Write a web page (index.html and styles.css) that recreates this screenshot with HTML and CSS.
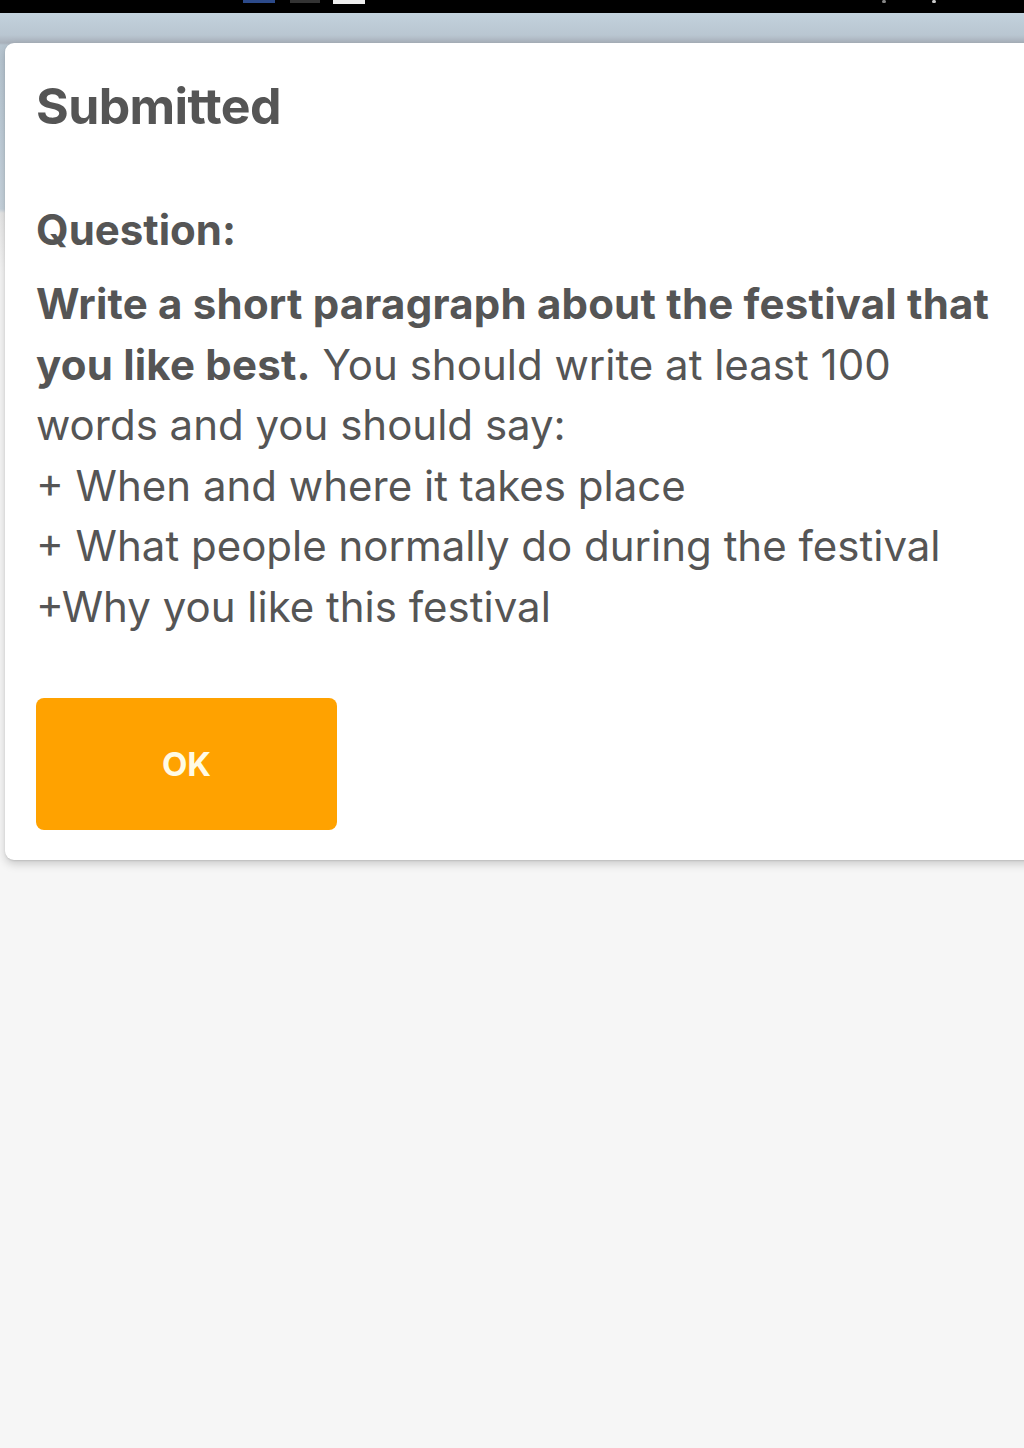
FILE: index.html
```html
<!DOCTYPE html>
<html lang="en">
<head>
<meta charset="utf-8">
<title>Submitted</title>
<link rel="stylesheet" href="styles.css">
</head>
<body>
<div class="statusbar">
  <span class="sb sb-blue"></span>
  <span class="sb sb-gray"></span>
  <span class="sb sb-white"></span>
  <span class="sb-dot sb-dot1"></span>
  <span class="sb-dot sb-dot2"></span>
</div>
<div class="page">
  <div class="card">
    <h1 class="title">Submitted</h1>
    <h2 class="label">Question:</h2>
    <p class="question"><strong>Write a short paragraph about the festival that you like best.</strong> You should write at least 100 words and you should say:<br>+ When and where it takes place<br>+ What people normally do during the festival<br>+Why you like this festival</p>
    <button class="ok">OK</button>
  </div>
</div>
</body>
</html>
```
FILE: styles.css
```css
html, body {
  margin: 0;
  padding: 0;
}
body {
  width: 1024px;
  height: 1448px;
  overflow: hidden;
  background: #f5f5f5;
  font-family: "Inter", "Liberation Sans", sans-serif;
  color: #555555;
}
.statusbar {
  height: 13px;
  background: #000;
  position: relative;
}
.sb {
  position: absolute;
  top: 0;
  height: 3px;
}
.sb-blue { left: 243px; width: 32px; background: #2c4a8a; }
.sb-gray { left: 290px; width: 30px; background: #333; }
.sb-white { left: 333px; width: 32px; height: 4px; background: #eee; }
.sb-dot {
  position: absolute;
  top: 0;
  width: 4px;
  height: 3px;
  background: #888;
  border-radius: 2px;
}
.sb-dot1 { left: 882px; }
.sb-dot2 { left: 932px; background: #ccc; }
.page {
  background:
    linear-gradient(180deg, #c3d2dd 0px, #b9c6d1 22px, #a9b1bb 30px, #b7c5d0 32px, #bfcdd8 120px, #c7d3dd 196px, #e8e8e8 200px, #f6f6f6 260px);
  padding: 30px 0 0 5px;
  height: 1435px;
  box-sizing: border-box;
}
.card {
  background: #fff;
  border-radius: 9px;
  margin-right: -20px;
  padding: 30px 31px 30px 31px;
  box-shadow: 0 4px 10px rgba(0, 0, 0, 0.18), 0 1px 2px rgba(0,0,0,0.1);
  height: 817px;
  box-sizing: border-box;
}
.title {
  margin: 0;
  font-size: 50px;
  font-weight: 700;
  line-height: 66px;
  letter-spacing: -0.6px;
}
.label {
  margin: 61px 0 0 0;
  font-size: 42px;
  font-weight: 700;
  line-height: 60px;
}
.question {
  margin: 14px 0 0 0;
  font-size: 42px;
  font-weight: 400;
  line-height: 60.5px;
}
.question strong {
  font-weight: 700;
  letter-spacing: 0.2px;
}
.ok {
  display: block;
  margin-top: 61px;
  width: 301px;
  height: 132px;
  border: none;
  border-radius: 8px;
  background: #ffa200;
  color: #fffbe6;
  font-family: "Inter", "Liberation Sans", sans-serif;
  font-size: 33px;
  font-weight: 700;
  padding: 0;
}
```
